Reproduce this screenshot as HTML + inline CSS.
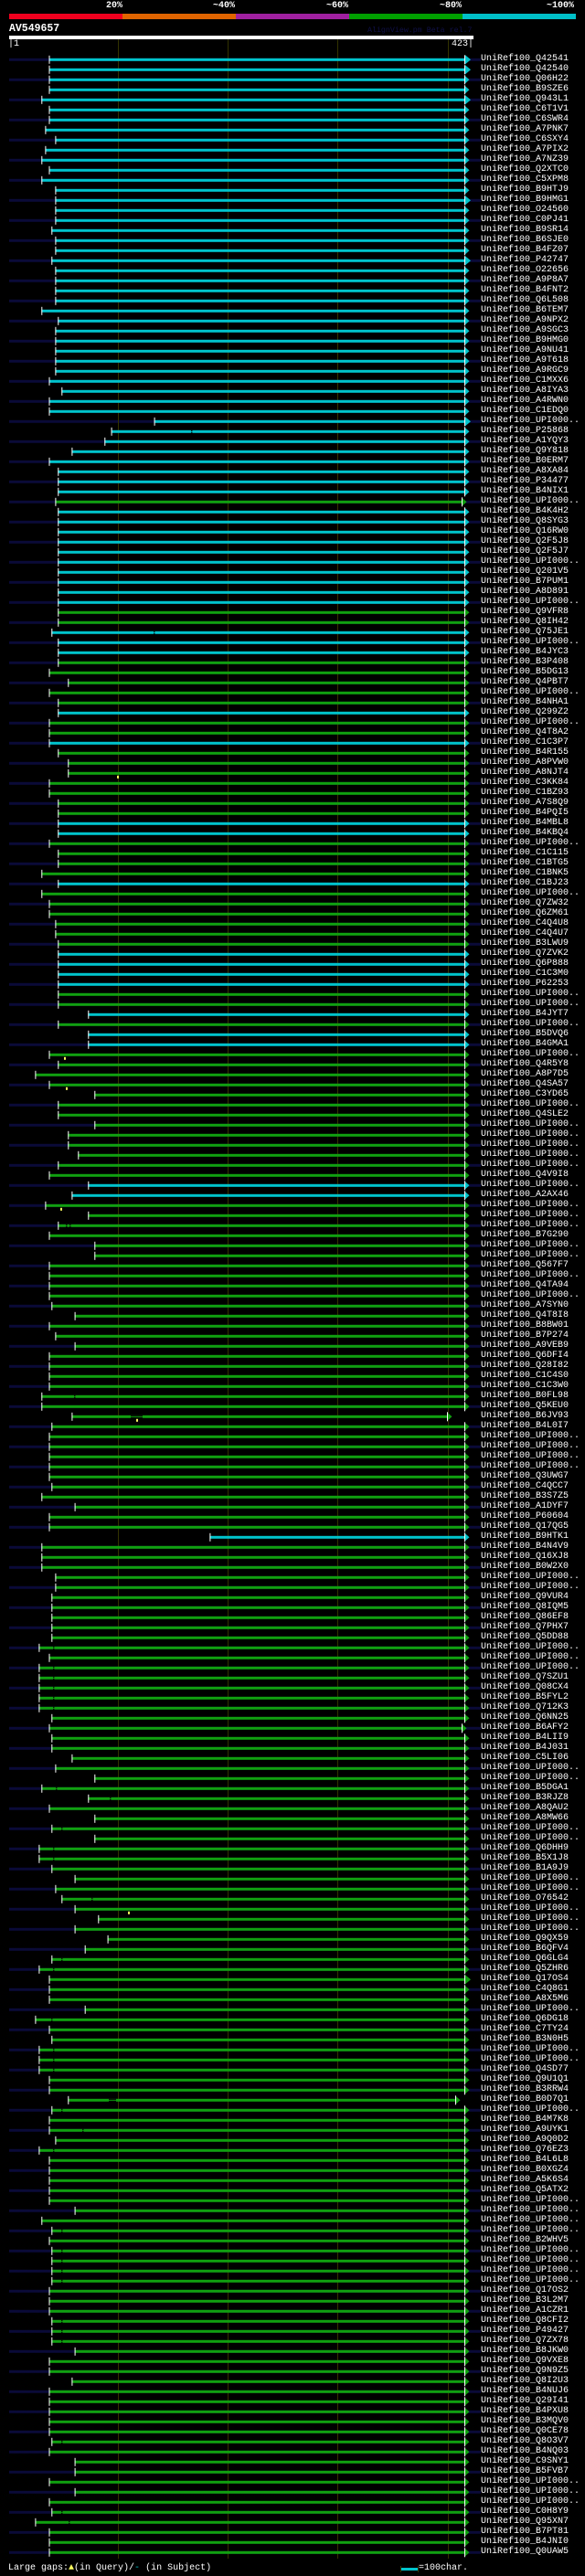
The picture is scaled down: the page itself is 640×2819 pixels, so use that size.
<!DOCTYPE html>
<html><head><meta charset="utf-8">
<style>
html,body{margin:0;padding:0;background:#000;}
body{width:640px;height:2819px;position:relative;overflow:hidden;font-family:"Liberation Mono",monospace;}
.t{position:absolute;white-space:pre;}
#labels{position:absolute;left:526px;top:59px;margin:0;font:10px/11px "Liberation Mono",monospace;color:#fff;}
svg{position:absolute;left:0;top:0;}
</style></head><body>
<svg id="g" width="640" height="2819" xmlns="http://www.w3.org/2000/svg">
<rect x="10" y="15" width="124" height="6" fill="#f0001e"/>
<rect x="134" y="15" width="124" height="6" fill="#e06400"/>
<rect x="258" y="15" width="124" height="6" fill="#a020a0"/>
<rect x="382" y="15" width="124" height="6" fill="#00a000"/>
<rect x="506" y="15" width="124" height="6" fill="#00c0c8"/>
<rect x="10" y="39" width="508" height="4" fill="#fff"/>
</svg>
<div class="t" style="left:105px;top:1px;font:bold 10px 'Liberation Mono',monospace;color:#fff;width:29px;text-align:right">20%</div>
<div class="t" style="left:217px;top:1px;font:bold 10px 'Liberation Mono',monospace;color:#fff;width:40px;text-align:right">~40%</div>
<div class="t" style="left:341px;top:1px;font:bold 10px 'Liberation Mono',monospace;color:#fff;width:40px;text-align:right">~60%</div>
<div class="t" style="left:465px;top:1px;font:bold 10px 'Liberation Mono',monospace;color:#fff;width:40px;text-align:right">~80%</div>
<div class="t" style="left:578px;top:1px;font:bold 10px 'Liberation Mono',monospace;color:#fff;width:50px;text-align:right">~100%</div>
<div class="t" style="left:10px;top:25px;font:bold 11.5px 'Liberation Mono',monospace;color:#fff">AV549657</div>
<div class="t" style="left:402px;top:29px;font:8.3px 'Liberation Mono',monospace;color:#101048">AlignView.pm Beta rel.7</div>
<div class="t" style="left:9px;top:43px;font:10px 'Liberation Mono',monospace;color:#fff">|1</div>
<div class="t" style="left:488px;top:43px;font:10px 'Liberation Mono',monospace;color:#fff;width:30px;text-align:right">423|</div>
<pre id="labels">UniRef100_Q42541
UniRef100_Q42540
UniRef100_Q06H22
UniRef100_B9SZE6
UniRef100_Q943L1
UniRef100_C6T1V1
UniRef100_C6SWR4
UniRef100_A7PNK7
UniRef100_C6SXY4
UniRef100_A7PIX2
UniRef100_A7NZ39
UniRef100_Q2XTC0
UniRef100_C5XPM8
UniRef100_B9HTJ9
UniRef100_B9HMG1
UniRef100_O24560
UniRef100_C0PJ41
UniRef100_B9SR14
UniRef100_B6SJE0
UniRef100_B4FZ07
UniRef100_P42747
UniRef100_O22656
UniRef100_A9P8A7
UniRef100_B4FNT2
UniRef100_Q6L508
UniRef100_B6TEM7
UniRef100_A9NPX2
UniRef100_A9SGC3
UniRef100_B9HMG0
UniRef100_A9NU41
UniRef100_A9T618
UniRef100_A9RGC9
UniRef100_C1MXX6
UniRef100_A8IYA3
UniRef100_A4RWN0
UniRef100_C1EDQ0
UniRef100_UPI000..
UniRef100_P25868
UniRef100_A1YQY3
UniRef100_Q9Y818
UniRef100_B0ERM7
UniRef100_A8XA84
UniRef100_P34477
UniRef100_B4NIX1
UniRef100_UPI000..
UniRef100_B4K4H2
UniRef100_Q8SYG3
UniRef100_Q16RW0
UniRef100_Q2F5J8
UniRef100_Q2F5J7
UniRef100_UPI000..
UniRef100_Q201V5
UniRef100_B7PUM1
UniRef100_A8D891
UniRef100_UPI000..
UniRef100_Q9VFR8
UniRef100_Q8IH42
UniRef100_Q75JE1
UniRef100_UPI000..
UniRef100_B4JYC3
UniRef100_B3P408
UniRef100_B5DG13
UniRef100_Q4PBT7
UniRef100_UPI000..
UniRef100_B4NHA1
UniRef100_Q299Z2
UniRef100_UPI000..
UniRef100_Q4T8A2
UniRef100_C1C3P7
UniRef100_B4R155
UniRef100_A8PVW0
UniRef100_A8NJT4
UniRef100_C3KK84
UniRef100_C1BZ93
UniRef100_A7S8Q9
UniRef100_B4PQI5
UniRef100_B4MBL8
UniRef100_B4KBQ4
UniRef100_UPI000..
UniRef100_C1C115
UniRef100_C1BTG5
UniRef100_C1BNK5
UniRef100_C1BJ23
UniRef100_UPI000..
UniRef100_Q7ZW32
UniRef100_Q6ZM61
UniRef100_C4Q4U8
UniRef100_C4Q4U7
UniRef100_B3LWU9
UniRef100_Q7ZVK2
UniRef100_Q6P888
UniRef100_C1C3M0
UniRef100_P62253
UniRef100_UPI000..
UniRef100_UPI000..
UniRef100_B4JYT7
UniRef100_UPI000..
UniRef100_B5DVQ6
UniRef100_B4GMA1
UniRef100_UPI000..
UniRef100_Q4R5Y8
UniRef100_A8P7D5
UniRef100_Q4SA57
UniRef100_C3YD65
UniRef100_UPI000..
UniRef100_Q4SLE2
UniRef100_UPI000..
UniRef100_UPI000..
UniRef100_UPI000..
UniRef100_UPI000..
UniRef100_UPI000..
UniRef100_Q4V9I8
UniRef100_UPI000..
UniRef100_A2AX46
UniRef100_UPI000..
UniRef100_UPI000..
UniRef100_UPI000..
UniRef100_B7G290
UniRef100_UPI000..
UniRef100_UPI000..
UniRef100_Q567F7
UniRef100_UPI000..
UniRef100_Q4TA94
UniRef100_UPI000..
UniRef100_A7SYN0
UniRef100_Q4T8I8
UniRef100_B8BW01
UniRef100_B7P274
UniRef100_A9VEB9
UniRef100_Q6DFI4
UniRef100_Q28I82
UniRef100_C1C4S0
UniRef100_C1C3W0
UniRef100_B0FL98
UniRef100_Q5KEU0
UniRef100_B6JV93
UniRef100_B4L0I7
UniRef100_UPI000..
UniRef100_UPI000..
UniRef100_UPI000..
UniRef100_UPI000..
UniRef100_Q3UWG7
UniRef100_C4QCC7
UniRef100_B3S7Z5
UniRef100_A1DYF7
UniRef100_P60604
UniRef100_Q17QG5
UniRef100_B9HTK1
UniRef100_B4N4V9
UniRef100_Q16XJ8
UniRef100_B0W2X0
UniRef100_UPI000..
UniRef100_UPI000..
UniRef100_Q9VUR4
UniRef100_Q8IQM5
UniRef100_Q86EF8
UniRef100_Q7PHX7
UniRef100_Q5DD88
UniRef100_UPI000..
UniRef100_UPI000..
UniRef100_UPI000..
UniRef100_Q7SZU1
UniRef100_Q08CX4
UniRef100_B5FYL2
UniRef100_Q712K3
UniRef100_Q6NN25
UniRef100_B6AFY2
UniRef100_B4LII9
UniRef100_B4J031
UniRef100_C5LI06
UniRef100_UPI000..
UniRef100_UPI000..
UniRef100_B5DGA1
UniRef100_B3RJZ8
UniRef100_A8QAU2
UniRef100_A8MW66
UniRef100_UPI000..
UniRef100_UPI000..
UniRef100_Q6DHH9
UniRef100_B5X1J8
UniRef100_B1A9J9
UniRef100_UPI000..
UniRef100_UPI000..
UniRef100_O76542
UniRef100_UPI000..
UniRef100_UPI000..
UniRef100_UPI000..
UniRef100_Q9QX59
UniRef100_B6QFV4
UniRef100_Q6GLG4
UniRef100_Q5ZHR6
UniRef100_Q17OS4
UniRef100_C4Q8G1
UniRef100_A8X5M6
UniRef100_UPI000..
UniRef100_Q6DG18
UniRef100_C7TY24
UniRef100_B3N0H5
UniRef100_UPI000..
UniRef100_UPI000..
UniRef100_Q4SD77
UniRef100_Q9U1Q1
UniRef100_B3RRW4
UniRef100_B0D7Q1
UniRef100_UPI000..
UniRef100_B4M7K8
UniRef100_A9UYK1
UniRef100_A9Q0D2
UniRef100_Q76EZ3
UniRef100_B4L6L8
UniRef100_B0XGZ4
UniRef100_A5K6S4
UniRef100_Q5ATX2
UniRef100_UPI000..
UniRef100_UPI000..
UniRef100_UPI000..
UniRef100_UPI000..
UniRef100_B2WHV5
UniRef100_UPI000..
UniRef100_UPI000..
UniRef100_UPI000..
UniRef100_UPI000..
UniRef100_Q17OS2
UniRef100_B3L2M7
UniRef100_A1CZR1
UniRef100_Q8CFI2
UniRef100_P49427
UniRef100_Q7ZX78
UniRef100_B8JKW0
UniRef100_Q9VXE8
UniRef100_Q9N9Z5
UniRef100_Q8I2U3
UniRef100_B4NUJ6
UniRef100_Q29I41
UniRef100_B4PXU8
UniRef100_B3MQV0
UniRef100_Q0CE78
UniRef100_Q8O3V7
UniRef100_B4NQ03
UniRef100_C9SNY1
UniRef100_B5FVB7
UniRef100_UPI000..
UniRef100_UPI000..
UniRef100_UPI000..
UniRef100_C0H8Y9
UniRef100_Q95XN7
UniRef100_B7PT81
UniRef100_B4JNI0
UniRef100_Q0UAW5</pre>
<div class="t" style="left:9px;top:2805px;font:10px 'Liberation Mono',monospace;color:#fff">Large gaps:<span style="color:#ffff60">&#9650;</span>(in Query)/<span style="color:#00c0c8">-</span> (in Subject)</div>
<div class="t" style="left:458px;top:2805px;font:10px 'Liberation Mono',monospace;color:#fff">=100char.</div>
<script>
(function(){
var rows=["53.5 c b","53.5 c b","53.5 c","53.5 c","45.3 c b","53.5 c","53.5 c","49.4 c","60.4 c","49.4 c",
"45.3 c","53.5 c","45.3 c","60.4 c","60.4 c b","60.4 c","60.4 c","56.3 c","60.4 c","60.4 c",
"56.3 c b","60.4 c","60.4 c","60.4 c","60.4 c","45.3 c","63.3 c","60.4 c","60.4 c","60.4 c",
"60.4 c","60.4 c","53.5 c","67.3 c","53.5 c","53.5 c","168.6 c b","121.6 c g209","114.3 c","78.4 c",
"53.5 c",
"63.3 c","63.3 c","63.3 c","60.4 g l","63.3 c","63.3 c","63.3 c","63.3 c","63.3 c","63.3 c",
"63.3 c","63.3 c","63.3 c","63.3 c","63.3 g","63.3 g","56.3 c g168","63.3 c","63.3 c","63.3 g",
"53.5 g","74.3 g","53.5 g","63.3 g","63.3 c","53.5 g","53.5 g","53.5 c","63.3 g","74.3 g",
"74.3 g y128","53.5 g","53.5 g","63.3 g","63.3 g","63.3 c","63.3 c","53.5 g","63.3 g","63.3 g",
"45.3 g","63.3 c",
"45.3 g","53.5 g","53.5 g","60.4 g","60.4 g","63.3 g","63.3 c","63.3 c","63.3 c","63.3 c",
"63.3 g","63.3 g","96.3 c","63.3 g","96.3 c","96.3 c","53.5 g y70","63.3 g","38.4 g","53.5 g y72",
"103.3 g","63.3 g","63.3 g","103.3 g","74.3 g","74.3 g","85.3 g","63.3 g","53.5 g","96.3 c",
"78.4 c","49.4 g y66","96.3 g","63.3 g g72 g76","53.5 g","103.3 g","103.3 g","53.5 g","53.5 g","53.5 g",
"53.5 g","56.3 g",
"81.6 g","53.5 g","60.4 g","81.6 g","53.5 g","53.5 g","53.5 g","53.5 g","45.3 g g81","45.3 g",
"78.4 g G143:13 y149 e490","56.3 g","53.5 g","53.5 g","53.5 g","53.5 g","53.5 g","56.3 g","45.3 g","81.6 g",
"53.5 g","53.5 g","229.4 c","45.3 g","45.3 g","45.3 g","60.4 g","60.4 g","56.3 g","56.3 g",
"56.3 g","56.3 g","56.3 g","42.4 g g58","53.5 g","42.4 g g58","42.4 g g58","42.4 g g58","42.4 g g58","42.4 g g58",
"56.3 g",
"53.5 g l","56.3 g","56.3 g","78.4 g","60.4 g","103.3 g","45.3 g g61","96.3 g g120","53.5 g","103.3 g",
"56.3 g g67","103.3 g","42.4 g g58","42.4 g g58","56.3 g","81.6 g","60.4 g","67.3 g g100","81.6 g y140","107.3 g",
"81.6 g","117.6 g","92.7 g","56.3 g g67","42.4 g g58","53.5 g b","53.5 g","53.5 g","92.7 g","38.4 g g56",
"53.5 g","56.3 g","42.4 g g58","42.4 g g58","42.4 g g58","53.5 g","53.5 g","74.3 g G119:8 e499","56.3 g g67","53.5 g",
"53.5 g g90","60.4 g",
"42.4 g g58","53.5 g","53.5 g","53.5 g","53.5 g","53.5 g","81.6 g","45.3 g","56.3 g g67","53.5 g",
"56.3 g g67","56.3 g g67","56.3 g g67","56.3 g g67","53.5 g","53.5 g","53.5 g","56.3 g g67","56.3 g g67","56.3 g g67",
"81.6 g","53.5 g","53.5 g","78.4 g","53.5 g","53.5 g","53.5 g","53.5 g","53.5 g","56.3 g g67",
"53.5 g","81.6 g","81.6 g","53.5 g","81.6 g","53.5 g","56.3 g g67","38.4 g g75","53.5 g","53.5 g","53.5 g"];
var ns="http://www.w3.org/2000/svg",svg=document.getElementById("g");
function R(x,y,w,h,f){var r=document.createElementNS(ns,"rect");r.setAttribute("x",x);r.setAttribute("y",y);r.setAttribute("width",w);r.setAttribute("height",h);r.setAttribute("fill",f);svg.appendChild(r);}
function P(pts,f){var p=document.createElementNS(ns,"polygon");p.setAttribute("points",pts);p.setAttribute("fill",f);svg.appendChild(p);}
var N=rows.length;
for(var i=0;i<N;i++){var y=65.3+11*i;if(i%2==0)R(10,y-1.5,516,3,"#0a0a38");}
[129,249,369,490].forEach(function(x){R(x,43,1,2757,"#333300");});
for(var i=0;i<N;i++){
 var y=65.3+11*i,p=rows[i].split(" "),s=parseFloat(p[0]),col=p[1]=="c"?"#00c4cc":"#10a010";
 var end=509,big=false,gaps=[],G=null,yel=[];
 for(var k=2;k<p.length;k++){var f=p[k];
  if(f=="b")big=true;else if(f=="l")end=506;
  else if(f[0]=="e")end=parseFloat(f.slice(1));
  else if(f[0]=="g")gaps.push(parseFloat(f.slice(1)));
  else if(f[0]=="G"){var q=f.slice(1).split(":");G=[parseFloat(q[0]),parseFloat(q[1])];}
  else if(f[0]=="y")yel.push(parseFloat(f.slice(1)));}
 R(s,y-1.5,end-s,3,col);
 gaps.forEach(function(g){R(g,y-1.5,1.5,1,"#000");R(g,y+0.5,1.5,1,"#000");});
 if(G){R(G[0],y-1.5,G[1],3,"#000");R(G[0],y-0.5,G[1],1,col);}
 yel.forEach(function(x){R(x,y+2.5,2,3,"#ffff60");});
 R(s,y-4.5,1,9,"#fff");
 R(end-1,y-5,1,10,"#fff");
 if(big)P(end+","+(y-5)+" "+(end+6)+","+y+" "+end+","+(y+5),col);
 else P(end+","+(y-4)+" "+(end+4.5)+","+y+" "+end+","+(y+4),col);
}
R(439,2810,18,3,"#00c4cc");R(438,2808,1,7,"#333300");R(457,2808,1,7,"#333300");
})();
</script>
</body></html>
